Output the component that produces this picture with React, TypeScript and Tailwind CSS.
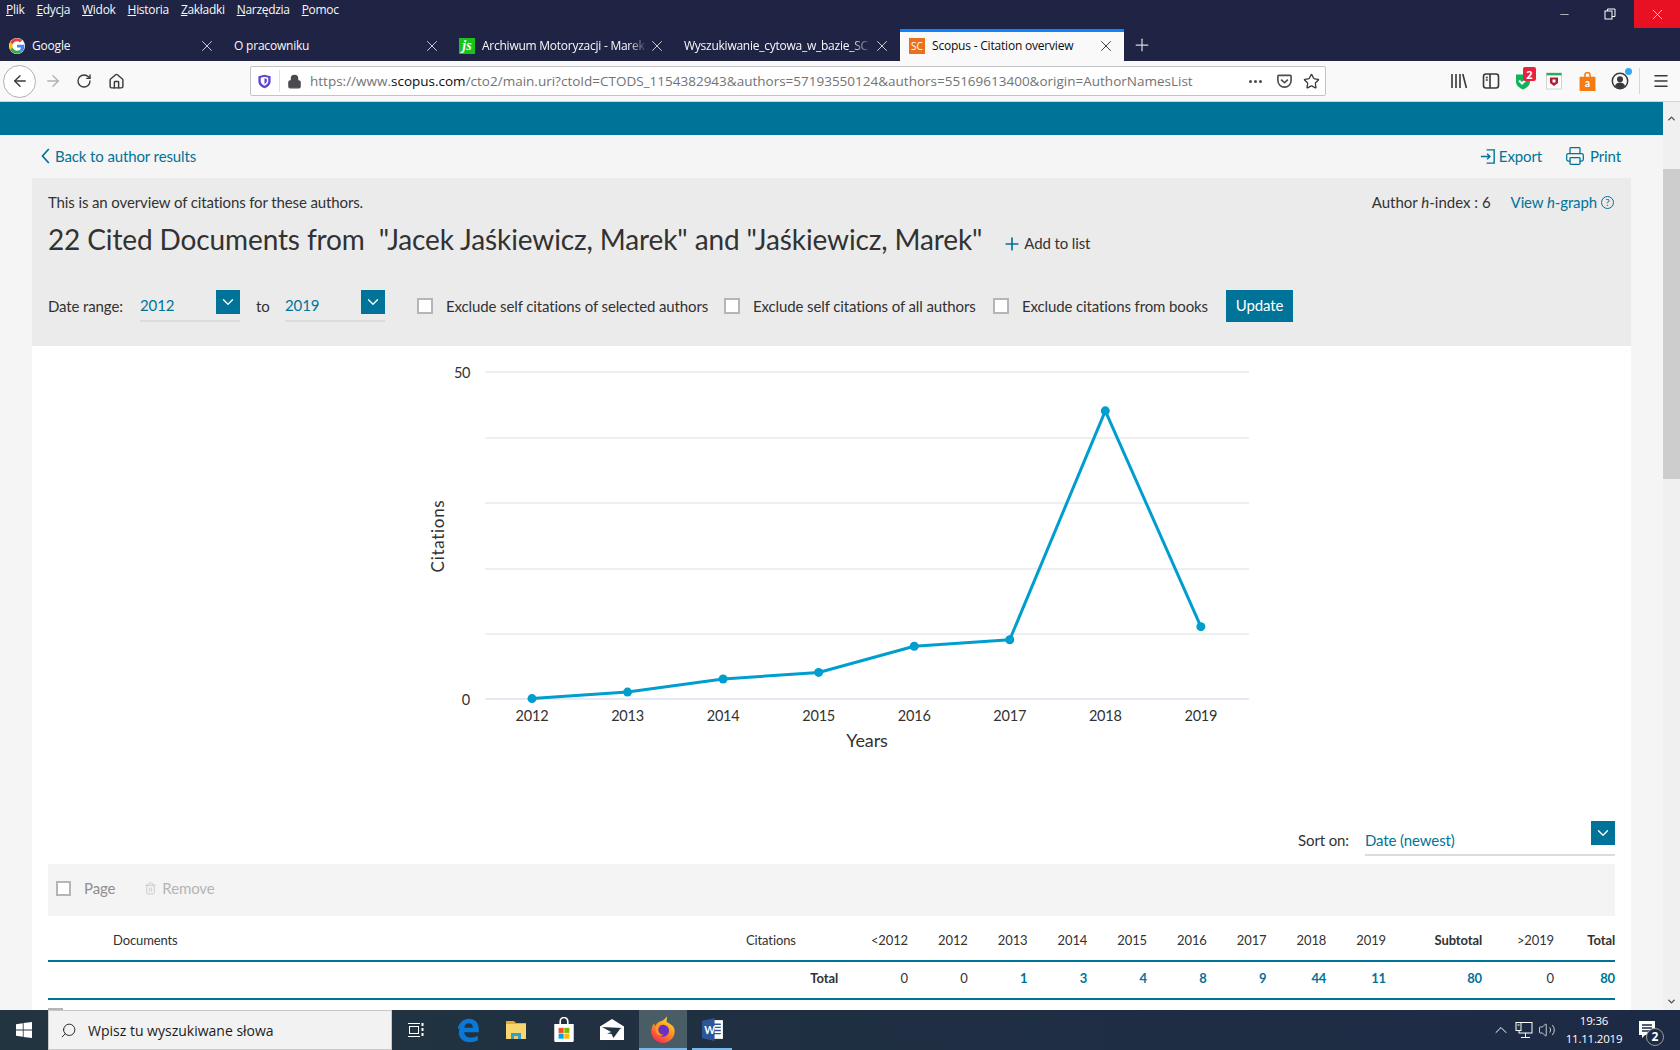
import { ReactNode } from 'react'
import {
  ArrowLeft,
  ArrowRight,
  ChevronDown,
  ChevronUp,
  Home,
  Lock,
  Menu,
  Minus,
  Plus,
  Printer,
  RotateCw,
  Search,
  Star,
  Trash2,
  Volume2,
  X,
} from 'lucide-react'

const menuItems = ['Plik', 'Edycja', 'Widok', 'Historia', 'Zakładki', 'Narzędzia', 'Pomoc']

const GoogleIcon = () => (
  <svg viewBox="0 0 48 48" className="h-4 w-4 rounded-full bg-white">
    <path fill="#EA4335" d="M24 10c3.5 0 6.6 1.3 9 3.4l6.4-6.4C35.4 3.300 30 1 24 1 15 1 7.200 6.200 3.400 13.700l7.500 5.800C12.700 14 17.900 10 24 10z" />
    <path fill="#4285F4" d="M46 24.500c0-1.600-.1-3.100-.4-4.500H24v8.700h12.400c-.5 2.900-2.100 5.300-4.600 7l7.200 5.600C43.200 37.400 46 31.500 46 24.500z" />
    <path fill="#FBBC05" d="M10.900 28.500c-.5-1.400-.7-2.900-.7-4.500s.3-3.100.7-4.500l-7.500-5.800C1.900 16.800 1 20.300 1 24s.9 7.200 2.400 10.300l7.500-5.800z" />
    <path fill="#34A853" d="M24 47c6.200 0 11.400-2 15-5.600l-7.200-5.600c-2 1.400-4.600 2.200-7.800 2.200-6.100 0-11.300-4-13.100-9.500l-7.500 5.800C7.200 41.800 15 47 24 47z" />
  </svg>
)

const JsIcon = () => (
  <div className="flex h-4 w-4 items-center justify-center bg-[#19c31a] font-['Liberation_Serif',serif] text-[14px] font-bold italic leading-none text-white">
    js
  </div>
)

const ScopusIcon = () => (
  <div className="flex h-4 w-4 items-center justify-center bg-[#e9711c] text-[10px] leading-none text-white">
    SC
  </div>
)

const Tab = ({
  icon,
  title,
  active,
  fade,
}: {
  icon?: ReactNode
  title: string
  active?: boolean
  fade?: boolean
}) => (
  <div
    className={
      active
        ? 'flex h-full w-[224px] items-center border-t-[3px] border-[#0a84ff] bg-[#f9f9fa] pb-[1px] pl-[9px] pr-[9px] text-[#0c0c0d]'
        : 'flex h-full w-[225px] items-center pl-[9px] pr-[9px] pt-[1px] text-[#f9f9fa]'
    }
  >
    {icon && <div className="mr-[7px] shrink-0">{icon}</div>}
    <span
      className={
        fade
          ? 'w-0 flex-1 overflow-hidden whitespace-nowrap tracking-[-0.25px] [mask-image:linear-gradient(to_right,black_88%,transparent)]'
          : 'w-0 flex-1 overflow-hidden whitespace-nowrap tracking-[-0.2px]'
      }
    >
      {title}
    </span>
    <X className="h-[18px] w-[18px] shrink-0 opacity-80" strokeWidth={1.3} />
  </div>
)

const SelectBox = ({ value, className }: { value: string; className: string }) => (
  <div className={`flex items-start justify-between border-b-2 border-[#dcdcdc] ${className}`}>
    <span className="pt-[5px] text-[15px] leading-5 text-[#007398]">{value}</span>
    <div className="flex h-6 w-6 items-center justify-center bg-[#007398]">
      <ChevronDown className="h-[18px] w-[18px] text-white" strokeWidth={1.8} />
    </div>
  </div>
)

const CheckItem = ({ label, width }: { label: string; width: string }) => (
  <div className={`flex items-center ${width}`}>
    <div className="mr-[13px] h-4 w-4 shrink-0 border-2 border-[#b5b5b5] bg-white" />
    <span className="whitespace-nowrap text-[15px] text-[#323232]">{label}</span>
  </div>
)

const chartPoints = [0, 1, 3, 4, 8, 9, 44, 11].map((v, i) => ({
  year: 2012 + i,
  x: 532 + i * 95.55,
  y: 697.6 - v * 6.54,
}))

const CitationChart = () => (
  <svg viewBox="32 345 1599 460" className="block h-[460px] w-[1599px]">
    {[371, 437, 502, 568, 633].map((y) => (
      <line key={y} x1="485" x2="1249" y1={y} y2={y} stroke="#dde0e4" strokeWidth="1.2" />
    ))}
    <line x1="485" x2="1249" y1="698" y2="698" stroke="#ccd6eb" strokeWidth="1.2" />
    <polyline
      points={chartPoints.map((p) => `${p.x},${p.y}`).join(' ')}
      fill="none"
      stroke="#009ecf"
      strokeWidth="3"
      strokeLinejoin="round"
    />
    {chartPoints.map((p) => (
      <circle key={p.year} cx={p.x} cy={p.y} r="4.500" fill="#009ecf" />
    ))}
    <g fontFamily="Lato, sans-serif" fontSize="14.500" fill="#323232">
      <text x="470" y="377" textAnchor="end" letterSpacing="-0.4">50</text>
      <text x="470" y="704" textAnchor="end">0</text>
      {chartPoints.map((p) => (
        <text key={p.year} x={p.x} y="720" textAnchor="middle" letterSpacing="-0.2">{p.year}</text>
      ))}
      <text x="867" y="746" textAnchor="middle" fontSize="18">Years</text>
      <text x="0" y="0" textAnchor="middle" fontSize="17" letterSpacing="0.7" transform="translate(444 535) rotate(-90)">Citations</text>
    </g>
  </svg>
)

const tableGrid = 'grid grid-cols-[698px_92px_70px_repeat(8,59.75px)_96px_72px_61px] items-center'

const headerYears = ['<2012', '2012', '2013', '2014', '2015', '2016', '2017', '2018', '2019']
const totals = [
  { v: '0' },
  { v: '0' },
  { v: '1', link: true },
  { v: '3', link: true },
  { v: '4', link: true },
  { v: '8', link: true },
  { v: '9', link: true },
  { v: '44', link: true },
  { v: '11', link: true },
  { v: '80', link: true },
  { v: '0' },
  { v: '80', link: true },
]

const WindowsLogo = () => (
  <svg viewBox="0 0 16 16" className="h-4 w-4" fill="#fff">
    <path d="M0 2.200 6.800 1.200V7.600H0zM7.600 1.100 16 0V7.600H7.600zM0 8.400H6.800V14.800L0 13.800zM7.600 8.400H16V16L7.600 14.900z" />
  </svg>
)

const TaskViewIcon = () => (
  <svg viewBox="0 0 18 18" className="h-[18px] w-[18px]" fill="none" stroke="#fff" strokeWidth="1">
    <rect x="2.500" y="5.500" width="9" height="7" />
    <path d="M1 2.500h12M1 15.500h12" />
    <path d="M15.500 2v3M15.500 7v3M15.500 12v3" strokeWidth="2" />
  </svg>
)

const EdgeIcon = () => (
  <svg viewBox="0 0 24 24" className="h-[26px] w-[26px]">
    <path
      fill="#0a78d7"
      d="M2.500 11C3.500 5 8 1.500 13 1.500c5.500 0 9 4 9 10v2.500H8.500c.4 3.400 3 5 6 5 2.600 0 4.800-.7 6.500-1.800v4.300c-1.800 1-4.300 1.800-7.500 1.800-5.800 0-10-3.500-10-9 0-3.500 1.700-6 4.500-7.800-1 1.100-1.700 2.300-2 3.500zM8.500 10H16.500c0-2.500-1.300-4.200-3.800-4.200S8.900 7.500 8.500 10z"
    />
  </svg>
)

const ExplorerIcon = () => (
  <svg viewBox="0 0 24 24" className="h-6 w-6">
    <path fill="#e8a92c" d="M2 3h8l2 2h10v3H2z" />
    <path fill="#f9d66d" d="M2 6h20v15H2z" />
    <path fill="#2d9fd8" d="M7 15h10v6H7z" />
    <path fill="#f4c95d" d="M10 18h4v3h-4z" />
  </svg>
)

const StoreIcon = () => (
  <svg viewBox="0 0 24 24" className="h-[26px] w-[26px]">
    <path fill="none" stroke="#fff" strokeWidth="1.500" d="M8.500 7V4a3.500 3.500 0 0 1 7 0v3" />
    <path fill="#fff" d="M3 6.500h18V22a1 1 0 0 1-1 1H4a1 1 0 0 1-1-1z" />
    <path fill="#f25022" d="M7 10h4.700v4.700H7z" />
    <path fill="#7fba00" d="M12.300 10H17v4.700h-4.700z" />
    <path fill="#00a4ef" d="M7 15.300h4.700V20H7z" />
    <path fill="#ffb900" d="M12.300 15.300H17V20h-4.700z" />
  </svg>
)

const MailIcon = () => (
  <svg viewBox="0 0 24 24" className="h-6 w-6">
    <path fill="#fff" d="M0 8.500 12 1l12 7.500V22H0z" />
    <path fill="#22343f" d="M2 9 22 10 12 14.500zM7 15.500 20 11 13.500 20 11.500 16z" />
  </svg>
)

const FirefoxIcon = () => (
  <svg viewBox="0 0 24 24" className="h-[28px] w-[28px]">
    <defs>
      <linearGradient id="ffg" x1="0.7" y1="0" x2="0.2" y2="1">
        <stop offset="0" stopColor="#ffe226" />
        <stop offset="0.5" stopColor="#ff8a1e" />
        <stop offset="1" stopColor="#f5245c" />
      </linearGradient>
    </defs>
    <path fill="url(#ffg)" d="M15 1c1 3-1 4 1 5.500 3 2 6 3 6 7.500a10 10 0 0 1-20 0c0-3 1-5.500 2.500-7 0 1 .5 2 1.200 2.200C6.500 6 10.500 5.500 12 4.500 13.500 3.500 14.500 2.500 15 1z" />
    <circle cx="12" cy="13.500" r="5.200" fill="#6b2fc2" />
    <path fill="#ff9a26" d="M6 10c1.500-1 3-1.200 4-.7-1.500.8-2.200 2-2 3.700.3 2.500 2.500 4.300 5 4-2.500 1.500-6 .5-7-2.500-.5-1.500-.4-3.100 0-4.500z" />
  </svg>
)

const WordIcon = () => (
  <svg viewBox="0 0 24 24" className="h-[25px] w-[25px]">
    <path fill="#fff" d="M9 3h13v18H9z" />
    <path stroke="#2b579a" strokeWidth="1.300" d="M13 7h7M13 10h7M13 13h7M13 16h7" />
    <path fill="#2b579a" d="M2 3.500 14 1v22L2 20.500z" />
    <text x="4" y="16" fontSize="10" fontWeight="700" fill="#fff" fontFamily="Lato, sans-serif">W</text>
  </svg>
)

const LibraryIcon = () => (
  <svg viewBox="0 0 18 18" className="h-[18px] w-[18px]" fill="none" stroke="#38383d" strokeWidth="1.600">
    <path d="M2 2v14M6 2v14M10 2v14M12.800 2l3.600 14" />
  </svg>
)

const SidebarIcon = () => (
  <svg viewBox="0 0 18 18" className="h-[18px] w-[18px]" fill="none" stroke="#38383d" strokeWidth="1.600">
    <rect x="1.500" y="2" width="15" height="14" rx="2.500" />
    <path d="M8 2v14" />
    <path d="M3.800 5.500h2M3.800 8h2" />
  </svg>
)

const ExtensionShield = () => (
  <div className="relative h-[18px] w-[18px]">
    <svg viewBox="0 0 18 18" className="h-[18px] w-[18px]">
      <path fill="#10b25a" d="M2 2.500h14v7c0 4-3.500 6.500-7 8-3.500-1.500-7-4-7-8z" />
      <path fill="none" stroke="#fff" strokeWidth="2" d="M5 8.500l3 3 5-5" />
    </svg>
    <div className="absolute left-[9px] top-[-5px] flex h-[14px] w-[13px] items-center justify-center rounded-[2px] bg-[#e8213f] text-[11px] font-bold leading-none text-white">
      2
    </div>
  </div>
)

const McAfeeIcon = () => (
  <svg viewBox="0 0 18 18" className="h-[18px] w-[18px]">
    <rect x="1.500" y="1" width="15" height="16" fill="#fff" stroke="#c9c9c9" strokeWidth="0.8" />
    <rect x="1.500" y="1" width="15" height="2.400" fill="#1fb35f" />
    <path fill="#b01e2e" d="M5 5.500h8v5.500L9 14 5 11z" />
    <path fill="#fff" d="M7.500 7.500h3v3h-3z" />
  </svg>
)

const BagIcon = () => (
  <svg viewBox="0 0 18 18" className="h-[19px] w-[19px]">
    <path fill="#f47a12" d="M1.500 4.500h15V18h-15z" />
    <path fill="none" stroke="#f47a12" strokeWidth="1.400" d="M6.500 5V3a2.500 2.500 0 0 1 5 0v2" />
    <text x="9" y="14.500" textAnchor="middle" fontSize="10" fontWeight="700" fill="#fff" fontFamily="Lato, sans-serif">a</text>
  </svg>
)

const AccountIcon = () => (
  <div className="relative h-[18px] w-[18px]">
    <svg viewBox="0 0 18 18" className="h-[18px] w-[18px]">
      <circle cx="9" cy="9" r="7.700" fill="none" stroke="#38383d" strokeWidth="1.500" />
      <circle cx="9" cy="7.200" r="3" fill="#38383d" />
      <path fill="#38383d" d="M3.800 14c1-2.500 3-3.500 5.200-3.500s4.200 1 5.200 3.500A7.500 7.500 0 0 1 9 16.300 7.500 7.500 0 0 1 3.800 14z" />
    </svg>
    <div className="absolute right-[-3px] top-[-4px] h-[7px] w-[7px] rounded-full bg-[#30a9f5]" />
  </div>
)

const PocketIcon = () => (
  <svg viewBox="0 0 18 18" className="h-[17px] w-[17px]" fill="none" stroke="#4a4a4f" strokeWidth="1.700">
    <path d="M2 3.500a1 1 0 0 1 1-1h12a1 1 0 0 1 1 1V8a7 7 0 0 1-14 0z" />
    <path d="M5.500 7 9 10.300 12.500 7" />
  </svg>
)

const ShieldIcon = () => (
  <svg viewBox="0 0 16 16" className="h-[15px] w-[15px]">
    <path fill="#5d45d6" d="M8 .8 14.500 2.500V8c0 3.500-3 6-6.500 7.300C4.500 14 1.500 11.500 1.500 8V2.500z" />
    <path fill="#fff" d="M8 3 12 4v4c0 2-2 3.600-4 4.500C6 11.600 4 10 4 8V4z" />
    <path fill="#5d45d6" d="M8 4.500 10.500 5.300v2.500c0 1.200-1.300 2.200-2.500 2.800z" />
  </svg>
)

const ExportIcon = () => (
  <svg viewBox="0 0 18 18" className="h-[17px] w-[17px]" fill="none" stroke="#007398" strokeWidth="1.500">
    <path d="M7 2h8v14H7" />
    <path d="M1 9h9M7.500 6l3 3-3 3" />
  </svg>
)

const BackChevron = () => (
  <svg viewBox="0 0 9 16" className="mr-[5px] h-[16px] w-[9px]" fill="none" stroke="#007398" strokeWidth="1.700">
    <path d="M7.800 1 1.500 8l6.300 7" />
  </svg>
)

const NetworkIcon = () => (
  <svg viewBox="0 0 18 18" className="h-[18px] w-[18px]" fill="none" stroke="#fff" strokeWidth="1">
    <rect x="4" y="1.500" width="13" height="10.500" />
    <rect x="1" y="1.500" width="5" height="8" fill="#22343f" />
    <path d="M10.500 12v4M6 16.500h9M2.500 4h2" />
  </svg>
)

const NotificationIcon = () => (
  <div className="relative h-5 w-5">
    <svg viewBox="0 0 20 20" className="h-5 w-5" fill="#fff">
      <path d="M2 1h16v14H8l-3 3v-3H2z" />
      <path stroke="#1d2a45" strokeWidth="1.400" d="M5 5h10M5 8h10M5 11h10" />
    </svg>
    <div className="absolute bottom-[-6px] right-[-7px] flex h-[18px] w-[18px] items-center justify-center rounded-full border border-[#9a9a9a] bg-[#1d2a45] text-[12px] font-bold leading-none text-white">
      2
    </div>
  </div>
)

export default function App() {
  return (
    <div className="flex h-[1050px] w-[1680px] flex-col overflow-hidden bg-white font-['Lato',sans-serif] text-[#323232]">
      {/* Window title + menu */}
      <div className="flex h-[61px] flex-col bg-[#1f2444] font-['Open_Sans',sans-serif] text-[12px]">
        <div className="flex h-[29px] shrink-0 items-start justify-between">
          <div className="flex gap-[12px] pl-[6px] pt-[2px] leading-4 text-[#f9f9fa]">
            {menuItems.map((item) => (
              <span key={item} className="tracking-[-0.3px]">
                <span className="underline">{item[0]}</span>
                {item.slice(1)}
              </span>
            ))}
          </div>
          <div className="flex h-[28px] items-center">
            <div className="flex w-[45px] justify-center">
              <Minus className="h-[13px] w-[13px] text-white" strokeWidth={1.2} />
            </div>
            <div className="flex w-[45px] justify-center">
              <svg viewBox="0 0 12 12" className="h-3 w-3" fill="none" stroke="#fff" strokeWidth="1">
                <rect x="1" y="3" width="7" height="8" />
                <path d="M3.500 3V1H11v7.500H8" />
              </svg>
            </div>
            <div className="ml-[2px] flex h-full w-[46px] items-center justify-center bg-[#e81123]">
              <X className="h-[17px] w-[17px] text-white" strokeWidth={1} />
            </div>
          </div>
        </div>
        <div className="flex h-[32px] items-stretch">
          <Tab icon={<GoogleIcon />} title="Google" />
          <Tab title="O pracowniku" />
          <Tab icon={<JsIcon />} title="Archiwum Motoryzacji - Marek" fade />
          <Tab title="Wyszukiwanie_cytowa_w_bazie_SC" fade />
          <Tab icon={<ScopusIcon />} title="Scopus - Citation overview" active />
          <div className="ml-[8px] flex items-center">
            <Plus className="h-[20px] w-[20px] text-[#d7d7db]" strokeWidth={1.5} />
          </div>
        </div>
      </div>

      {/* Navigation toolbar */}
      <div className="flex h-[41px] shrink-0 items-center border-b border-[#d4d4d6] bg-[#f9f9fa] font-['Open_Sans',sans-serif]">
        <div className="ml-[3px] flex h-[33px] w-[33px] items-center justify-center rounded-full border border-[#b1b1b3] bg-white">
          <ArrowLeft className="h-[18px] w-[18px] text-[#38383d]" strokeWidth={1.800} />
        </div>
        <ArrowRight className="ml-[8px] h-[18px] w-[18px] text-[#b1b1b3]" strokeWidth={1.800} />
        <RotateCw className="ml-[14px] h-[16px] w-[16px] text-[#38383d]" strokeWidth={2} />
        <Home className="ml-[16px] h-[17px] w-[17px] text-[#38383d]" strokeWidth={2} />
        <div className="ml-[125px] flex h-[30px] w-[1076px] items-center rounded-[2px] border border-[#c4c4c6] bg-white pl-[6px]">
          <ShieldIcon />
          <div className="mx-[7px] h-[22px] w-px bg-[#e1e1e2]" />
          <Lock className="h-[15px] w-[15px] text-[#4a4a4f]" fill="#4a4a4f" strokeWidth={2} />
          <div className="ml-[8px] w-[888px] whitespace-nowrap text-[13.5px] text-[#737373]">
            https://www.<span className="text-[#0c0c0d]">scopus.com</span>
            /cto2/main.uri?ctoId=CTODS_1154382943&amp;authors=57193550124&amp;authors=55169613400&amp;origin=AuthorNamesList
          </div>
          <div className="ml-[51px] flex gap-[2px]">
            <div className="h-[3px] w-[3px] rounded-full bg-[#4a4a4f]" />
            <div className="h-[3px] w-[3px] rounded-full bg-[#4a4a4f]" />
            <div className="h-[3px] w-[3px] rounded-full bg-[#4a4a4f]" />
          </div>
          <div className="ml-[14px]"><PocketIcon /></div>
          <Star className="ml-[10px] h-[17px] w-[17px] text-[#38383d]" strokeWidth={1.800} />
        </div>
        <div className="ml-[124px]"><LibraryIcon /></div>
        <div className="ml-[14px]"><SidebarIcon /></div>
        <div className="ml-[14px]"><ExtensionShield /></div>
        <div className="ml-[13px]"><McAfeeIcon /></div>
        <div className="ml-[15px]"><BagIcon /></div>
        <div className="ml-[14px]"><AccountIcon /></div>
        <div className="ml-[10px] h-[26px] w-px bg-[#d7d7db]" />
        <Menu className="ml-[12px] h-[18px] w-[18px] text-[#38383d]" strokeWidth={2} />
      </div>

      {/* Page + scrollbar */}
      <div className="flex min-h-0 flex-1">
        <div className="flex w-[1663px] flex-col overflow-hidden bg-[#f5f5f5] tracking-[-0.12px]">
          <div className="h-[33px] shrink-0 bg-[#007398]" />
          <div className="mx-[32px] flex h-[43px] shrink-0 items-center justify-between pb-[1px] text-[15px] text-[#007398]">
            <div className="flex items-center pl-[9px]">
              <BackChevron />
              Back to author results
            </div>
            <div className="flex items-center pr-[10px]">
              <ExportIcon />
              <span className="ml-[2px]">Export</span>
              <Printer className="ml-[23px] h-[20px] w-[20px]" strokeWidth={1.500} />
              <span className="ml-[5px]">Print</span>
            </div>
          </div>

          <div className="mr-[32px] flex flex-1 flex-col pl-[32px]">
            {/* Summary panel */}
            <div className="h-[168px] shrink-0 bg-[#ebebeb] px-[16px] pt-[14px]">
              <div className="flex h-5 items-center justify-between text-[15px] leading-5">
                <span>This is an overview of citations for these authors.</span>
                <div className="flex items-center pr-[1px]">
                  <span className="tracking-normal">
                    Author <i>h</i>-index : 6
                  </span>
                  <span className="ml-[20px] text-[#007398]">
                    View <i>h</i>-graph
                  </span>
                  <span className="ml-[4px] flex h-[13px] w-[13px] items-center justify-center rounded-full border border-[#007398] text-[10px] leading-none text-[#007398]">
                    ?
                  </span>
                </div>
              </div>
              <div className="mb-[23px] flex h-[55px] items-center">
                <h1 className="-mt-[2px] whitespace-pre text-[28px] font-normal leading-none">
                  22 Cited Documents from  "Jacek Jaśkiewicz, Marek" and "Jaśkiewicz, Marek"
                </h1>
                <div className="ml-[20px] mt-[8px] flex items-center text-[15px]">
                  <Plus className="mr-[2px] h-[20px] w-[20px] text-[#007398]" strokeWidth={2} />
                  Add to list
                </div>
              </div>
              <div className="flex h-[32px] items-center text-[15px]">
                <span className="w-[92px] whitespace-nowrap">Date range:</span>
                <SelectBox value="2012" className="h-[32px] w-[100px]" />
                <span className="ml-[16px] w-[29px]">to</span>
                <SelectBox value="2019" className="h-[32px] w-[100px]" />
                <div className="w-[32px]" />
                <CheckItem label="Exclude self citations of selected authors" width="w-[307px]" />
                <CheckItem label="Exclude self citations of all authors" width="w-[269px]" />
                <CheckItem label="Exclude citations from books" width="w-[233px]" />
                <div className="flex h-[32px] w-[67px] items-center justify-center bg-[#007398] pb-[2px] text-[15px] text-white">
                  Update
                </div>
              </div>
            </div>

            {/* White results area */}
            <div className="flex-1 bg-white">
              <CitationChart />
              <div className="flex h-[58px] items-start justify-end px-[16px] pt-[15px]">
                <span className="mr-[16px] mt-[8px] text-[15px]">Sort on:</span>
                <div className="flex h-[35px] w-[250px] items-start justify-between border-b-2 border-[#dcdcdc]">
                  <span className="pt-[9px] text-[15px] leading-5 text-[#007398]">Date (newest)</span>
                  <div className="flex h-6 w-6 items-center justify-center bg-[#007398]">
                    <ChevronDown className="h-[18px] w-[18px] text-white" strokeWidth={1.8} />
                  </div>
                </div>
              </div>

              <div className="mx-[16px]">
                <div className="flex h-[52px] items-center bg-[#f4f4f4] pb-[4px] pl-[8px] text-[15px] text-[#8f8f8f]">
                  <div className="h-[15px] w-[15px] border-2 border-[#b5b5b5] bg-white" />
                  <span className="ml-[13px]">Page</span>
                  <Trash2 className="ml-[29px] h-[15px] w-[13px] text-[#c4c4c4]" strokeWidth={1.500} />
                  <span className="ml-[5px] text-[#b5b5b5]">Remove</span>
                </div>

                <div className={`${tableGrid} h-[46px] border-b-2 border-[#007398] pt-[6px] text-[13px]`}>
                  <span className="pl-[65px]">Documents</span>
                  <span>Citations</span>
                  {headerYears.map((y) => (
                    <span key={y} className="text-right">{y}</span>
                  ))}
                  <span className="text-right font-bold">Subtotal</span>
                  <span className="text-right">&gt;2019</span>
                  <span className="text-right font-bold">Total</span>
                </div>
                <div className={`${tableGrid} h-[38px] border-b-2 border-[#007398] pb-[2px] text-[13px]`}>
                  <span />
                  <span className="text-right font-bold">Total</span>
                  {totals.map((t, i) => (
                    <span
                      key={i}
                      className={t.link ? 'text-right font-bold text-[#007398]' : 'text-right'}
                    >
                      {t.v}
                    </span>
                  ))}
                </div>
                <div className="mt-[8px] h-[2px] w-[15px] bg-[#b5b5b5]" />
              </div>
            </div>
          </div>
        </div>

        {/* Scrollbar */}
        <div className="flex w-[17px] flex-col items-center bg-[#f0f0f0]">
          <div className="flex h-[32px] w-full shrink-0 items-center justify-center">
            <ChevronUp className="h-[11px] w-[11px] text-[#505050]" strokeWidth={3} />
          </div>
          <div className="mt-[35px] h-[310px] w-full shrink-0 bg-[#cdcdcd]" />
          <div className="mt-auto flex h-[17px] w-full items-center justify-center">
            <ChevronDown className="h-[11px] w-[11px] text-[#505050]" strokeWidth={3} />
          </div>
        </div>
      </div>

      {/* Windows taskbar */}
      <div className="flex h-[40px] shrink-0 items-stretch bg-gradient-to-r from-[#22343f] to-[#1d2a45] font-['Open_Sans',sans-serif] text-white">
        <div className="flex w-[48px] items-center justify-center">
          <WindowsLogo />
        </div>
        <div className="flex w-[344px] items-center border border-[#c8c8c8] bg-[#f2f2f2] pl-[11px] text-[14px] text-[#1c1c1c]">
          <Search className="h-[17px] w-[17px] -scale-x-100" strokeWidth={1.300} />
          <span className="ml-[11px]">Wpisz tu wyszukiwane słowa</span>
        </div>
        <div className="flex w-[48px] items-center justify-center"><TaskViewIcon /></div>
        <div className="ml-[4px] flex w-[48px] items-center justify-center"><EdgeIcon /></div>
        <div className="flex w-[48px] items-center justify-center"><ExplorerIcon /></div>
        <div className="flex w-[48px] items-center justify-center"><StoreIcon /></div>
        <div className="flex w-[48px] items-center justify-center"><MailIcon /></div>
        <div className="ml-[3px] flex w-[48px] items-center justify-center border-b-2 border-[#76b9ed] bg-[#4a5c66]"><FirefoxIcon /></div>
        <div className="ml-[5px] flex w-[40px] items-center justify-center border-b-2 border-[#76b9ed]"><WordIcon /></div>
        <div className="ml-auto flex items-center pr-[2px]">
          <ChevronUp className="h-[20px] w-[20px]" strokeWidth={1.200} />
          <div className="ml-[4px]"><NetworkIcon /></div>
          <Volume2 className="ml-[5px] h-[18px] w-[18px]" strokeWidth={1} />
          <div className="ml-[8px] flex w-[60px] flex-col items-center text-[11.5px] leading-[18px] tracking-[-0.2px]">
            <span>19:36</span>
            <span>11.11.2019</span>
          </div>
          <div className="ml-[13px] mr-[21px]"><NotificationIcon /></div>
        </div>
      </div>
    </div>
  )
}
